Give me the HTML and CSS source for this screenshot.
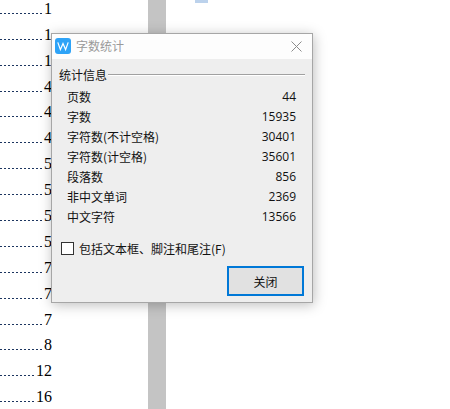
FILE: index.html
```html
<!DOCTYPE html>
<html lang="zh">
<head>
<meta charset="utf-8">
<title>字数统计</title>
<link rel="stylesheet" href="styles.css">
</head>
<body>
<div class="page">
  <div class="toc">
    <div class="toc-row"><span class="leader"></span><span class="num">1</span></div>
    <div class="toc-row"><span class="leader"></span><span class="num">1</span></div>
    <div class="toc-row"><span class="leader"></span><span class="num">1</span></div>
    <div class="toc-row"><span class="leader"></span><span class="num">4</span></div>
    <div class="toc-row"><span class="leader"></span><span class="num">4</span></div>
    <div class="toc-row"><span class="leader"></span><span class="num">4</span></div>
    <div class="toc-row"><span class="leader"></span><span class="num">5</span></div>
    <div class="toc-row"><span class="leader"></span><span class="num">5</span></div>
    <div class="toc-row"><span class="leader"></span><span class="num">5</span></div>
    <div class="toc-row"><span class="leader"></span><span class="num">5</span></div>
    <div class="toc-row"><span class="leader"></span><span class="num">7</span></div>
    <div class="toc-row"><span class="leader"></span><span class="num">7</span></div>
    <div class="toc-row"><span class="leader"></span><span class="num">7</span></div>
    <div class="toc-row"><span class="leader"></span><span class="num">8</span></div>
    <div class="toc-row"><span class="leader"></span><span class="num">12</span></div>
    <div class="toc-row"><span class="leader"></span><span class="num">16</span></div>
  </div>
  <div class="gutter"></div>
  <div class="sheet"><div class="selection-mark"></div></div>
</div>

<section class="dialog">
  <header class="titlebar">
    <svg class="app-icon" width="16" height="16" viewBox="0 0 16 16" aria-hidden="true">
      <rect width="16" height="16" rx="3" fill="#2ea3f7"/>
      <path d="M2.8 4.4 L5.4 11.6 L8 5.6 L10.6 11.6 L13.2 4.4" fill="none" stroke="#fff" stroke-width="1.2"/>
    </svg>
    <span class="title">字数统计</span>
    <svg class="close" width="11" height="11" viewBox="0 0 11 11" aria-hidden="true">
      <path d="M0.5 0.5 L10.5 10.5 M10.5 0.5 L0.5 10.5" stroke="#8c8c8c" stroke-width="1" fill="none"/>
    </svg>
  </header>
  <div class="body">
    <div class="group-head"><span>统计信息</span><i class="rule"></i></div>
    <dl class="stats">
      <div class="stat"><dt>页数</dt><dd>44</dd></div>
      <div class="stat"><dt>字数</dt><dd>15935</dd></div>
      <div class="stat"><dt>字符数(不计空格)</dt><dd>30401</dd></div>
      <div class="stat"><dt>字符数(计空格)</dt><dd>35601</dd></div>
      <div class="stat"><dt>段落数</dt><dd>856</dd></div>
      <div class="stat"><dt>非中文单词</dt><dd>2369</dd></div>
      <div class="stat"><dt>中文字符</dt><dd>13566</dd></div>
    </dl>
    <label class="check"><span class="box"></span><span>包括文本框、脚注和尾注(F)</span></label>
    <div class="actions"><button class="btn" type="button">关闭</button></div>
  </div>
</section>
</body>
</html>
```
FILE: styles.css
```css
html, body {
  margin: 0;
  padding: 0;
  background: #fff;
}
body {
  width: 450px;
  height: 409px;
  overflow: hidden;
  position: relative;
}
.page {
  display: flex;
  height: 409px;
}
.toc {
  width: 148px;
  flex: none;
  margin-top: -8px;
  font-family: "Liberation Serif", serif;
  font-size: 16px;
  color: #000;
}
.toc-row {
  display: flex;
  align-items: flex-end;
  width: 52px;
  height: 25.9px;
  line-height: 18px;
}
.leader {
  flex: 1;
  height: 1px;
  margin: 0 0 4px 0;
  background: repeating-linear-gradient(90deg, #1c3560 0 2px, transparent 2px 4px);
}
.num {
  flex: none;
}
.gutter {
  width: 18px;
  flex: none;
  background: #c4c4c4;
}
.sheet {
  flex: 1;
  padding-left: 29px;
}
.selection-mark {
  width: 13px;
  height: 3px;
  background: #bcd2ec;
}
.dialog {
  position: absolute;
  left: 51px;
  top: 33px;
  width: 262px;
  height: 270px;
  box-sizing: border-box;
  border: 1px solid #a6a6a6;
  background: #eeeeee;
  box-shadow: 1px 2px 12px rgba(0, 0, 0, 0.26);
  font-family: "Noto Sans CJK SC", sans-serif;
  font-size: 12px;
  color: #111;
}
.titlebar {
  height: 25px;
  box-sizing: border-box;
  padding: 0 10px 1px 3px;
  background: #fdfdfd;
  display: flex;
  align-items: center;
  gap: 5px;
}
.app-icon {
  flex: none;
}
.title {
  flex: 1;
  color: #9a9a9a;
  line-height: 16px;
}
.close {
  flex: none;
  margin-top: 1px;
}
.body {
  padding: 7px 7px 0 7px;
}
.group-head {
  display: flex;
  align-items: center;
  gap: 1px;
  height: 16px;
}
.rule {
  flex: 1;
  height: 1px;
  margin-top: 2px;
  background: #a0a0a0;
  border-bottom: 1px solid #fff;
}
.stats {
  margin: 5px 0 0;
  padding: 0 9px 0 8px;
}
.stat {
  display: flex;
  justify-content: space-between;
  height: 20px;
  line-height: 20px;
}
.stat dt, .stat dd {
  margin: 0;
}
.stat dd {
  font-family: "Open Sans", sans-serif;
}
.check {
  display: flex;
  align-items: center;
  gap: 5px;
  margin: 13px 0 0 2px;
  height: 16px;
}
.box {
  width: 11px;
  height: 11px;
  border: 1px solid #333;
  background: #fff;
  flex: none;
}
.actions {
  display: flex;
  justify-content: flex-end;
  margin: 10px 1px 0 0;
}
.btn {
  width: 77px;
  height: 30px;
  box-sizing: border-box;
  border: 2px solid #0078d7;
  background: #e1e1e1;
  font: inherit;
  color: #111;
  padding: 0;
}
```
